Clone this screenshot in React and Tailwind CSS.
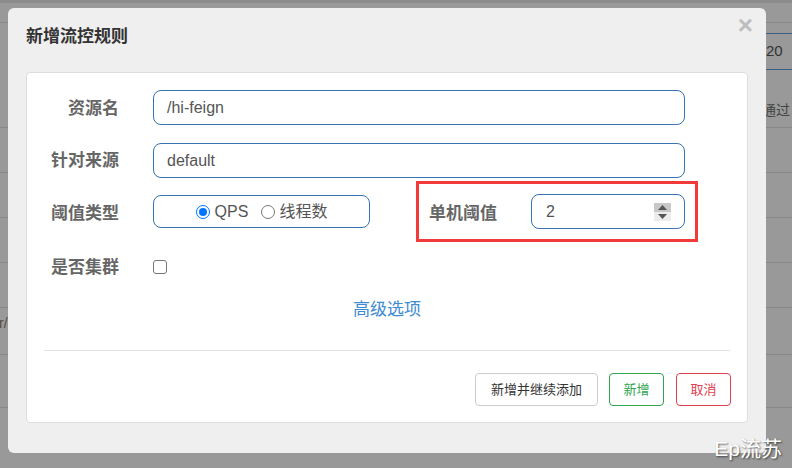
import React from 'react';

const font = { fontFamily: '"Liberation Sans", "Noto Sans CJK SC", sans-serif' };

function Label({ children, extra = '' }) {
  return (
    <div className={`w-[92px] shrink-0 text-right text-[17px] font-bold text-[#666] leading-none ${extra}`}>{children}</div>
  );
}

function TextInput({ value, width = 'w-[532px]' }) {
  return (
    <div
      className={`${width} h-[35px] ml-[34px] flex items-center px-[13px] border border-[#3573b2] rounded-[8px] text-[16px] text-[#555] bg-white`}
    >
      {value}
    </div>
  );
}

function Radio({ checked }) {
  return checked ? (
    <span className="block shrink-0 w-[14px] h-[14px] rounded-full border-[1.5px] border-[#0075ff] flex items-center justify-center">
      <span className="block w-[8px] h-[8px] rounded-full bg-[#0075ff]" />
    </span>
  ) : (
    <span className="block shrink-0 w-[14px] h-[14px] rounded-full border border-[#767676]" />
  );
}

export default function App() {
  return (
    <div className="relative w-[792px] h-[468px] overflow-hidden bg-[#999]" style={font}>
      {/* page behind the overlay */}
      <div className="flex flex-col w-full h-full">
        <div className="h-[3px] bg-[#8c8c8c]" />
        <div className="h-[20px] border-b border-[#888]" />
        <div className="h-[105px] border-b border-[#888] flex justify-end">
          <div className="w-[26px] flex flex-col">
            <div className="h-[11px] border-b border-[#3a5f85]" />
            <div className="h-[35px] flex items-center text-[15px] text-[#333]">20</div>
            <div className="h-[23px] border-t border-[#3a5f85]" />
            <div className="h-[34px] flex items-center text-[14px] text-[#444] -ml-[4px]" style={{ fontFamily: '"Noto Sans CJK SC", sans-serif' }}>通过</div>
          </div>
        </div>
        <div className="h-[45px] border-b border-[#888]" />
        <div className="h-[45px] border-b border-[#888]" />
        <div className="h-[45px] border-b border-[#888]" />
        <div className="h-[45px] border-b border-[#888]" />
        <div className="h-[47px] border-b border-[#888] pt-[8px] text-[14px] leading-none text-[#5a4a3a]">
          <span className="block w-[8px] overflow-hidden whitespace-nowrap"><span className="-ml-[1px]">r/</span></span>
        </div>
        <div className="h-[53px] border-b border-[#888]" />
      </div>

      {/* modal */}
      <div className="absolute left-[8px] top-[8px] w-[758px] h-[445px] rounded-[6px] bg-[#efefef] flex flex-col">
        <div className="relative h-[64px] flex items-center pl-[18px] pb-[6px]">
          <span className="text-[17px] font-bold text-[#333]">新增流控规则</span>
          <span className="absolute right-[13px] top-[4px] text-[26px] font-bold leading-none text-[#bdbdbd]">×</span>
        </div>

        <div className="mx-[18px] h-[351px] bg-white rounded-[4px] border border-[#ddd] flex flex-col">
          <div className="mt-[17px] flex items-center">
            <Label extra="pt-[1px]">资源名</Label>
            <TextInput value="/hi-feign" />
          </div>
          <div className="mt-[18px] flex items-center">
            <Label>针对来源</Label>
            <TextInput value="default" />
          </div>
          <div className="mt-[3px] h-[61px] flex items-center">
            <Label extra="pt-[3px]">阈值类型</Label>
            <div className="ml-[34px] w-[217px] h-[33px] border border-[#3573b2] rounded-[8px] flex items-center justify-center text-[16px] text-[#555]">
              <Radio checked />
              <span className="ml-[5px]">QPS</span>
              <span className="ml-[13px]"><Radio /></span>
              <span className="ml-[4px]">线程数</span>
            </div>
            <div className="ml-[46px] w-[282px] h-[61px] border-[3px] border-[#f23a3a] flex items-center pl-[10px]">
              <div className="w-[68px] pt-[3px] text-[17px] font-bold text-[#666] leading-none">单机阈值</div>
              <div className="ml-[34px] w-[154px] h-[35px] border border-[#3573b2] rounded-[8px] flex items-center justify-between pl-[14px] pr-[13px] text-[16px] text-[#555]">
                <span>2</span>
                <div className="w-[17px] h-[18px] flex flex-col">
                  <div className="h-[9px] bg-[#c8c8c8] flex items-center justify-center">
                    <svg width="9" height="5" viewBox="0 0 9 5"><path d="M4.5 0 L9 5 L0 5 Z" fill="#555" /></svg>
                  </div>
                  <div className="h-[9px] bg-[#ececec] flex items-center justify-center">
                    <svg width="9" height="5" viewBox="0 0 9 5"><path d="M0 0 L9 0 L4.5 5 Z" fill="#555" /></svg>
                  </div>
                </div>
              </div>
            </div>
          </div>
          <div className="mt-[15px] h-[20px] flex items-center">
            <Label>是否集群</Label>
            <span className="ml-[34px] w-[14px] h-[14px] rounded-[3px] border border-[#767676] bg-white" />
          </div>
          <div className="mt-[20px] h-[24px] flex items-center justify-center text-[17px] text-[#3d8bd0] pt-[1px]">
            高级选项
          </div>
          <div className="mt-[29px] mx-[17px] h-px bg-[#e3e3e3]" />
          <div className="mt-[22px] mr-[16px] flex justify-end gap-[11px] text-[13px]">
            <div className="w-[123px] h-[33px] border border-[#ccc] rounded-[4px] flex items-center justify-center text-[#333]">
              新增并继续添加
            </div>
            <div className="w-[55px] h-[33px] border border-[#2ea44f] rounded-[4px] flex items-center justify-center text-[#2ea44f]">
              新增
            </div>
            <div className="ml-[1px] w-[55px] h-[33px] border border-[#e0404f] rounded-[4px] flex items-center justify-center text-[#e0404f]">
              取消
            </div>
          </div>
        </div>
      </div>

      {/* watermark */}
      <div
        className="absolute right-[10px] bottom-[9px] text-[21px] leading-none text-white"
        style={{ textShadow: '1px 1px 2px rgba(0,0,0,0.6)' }}
      >
        Ep流苏
      </div>
    </div>
  );
}
